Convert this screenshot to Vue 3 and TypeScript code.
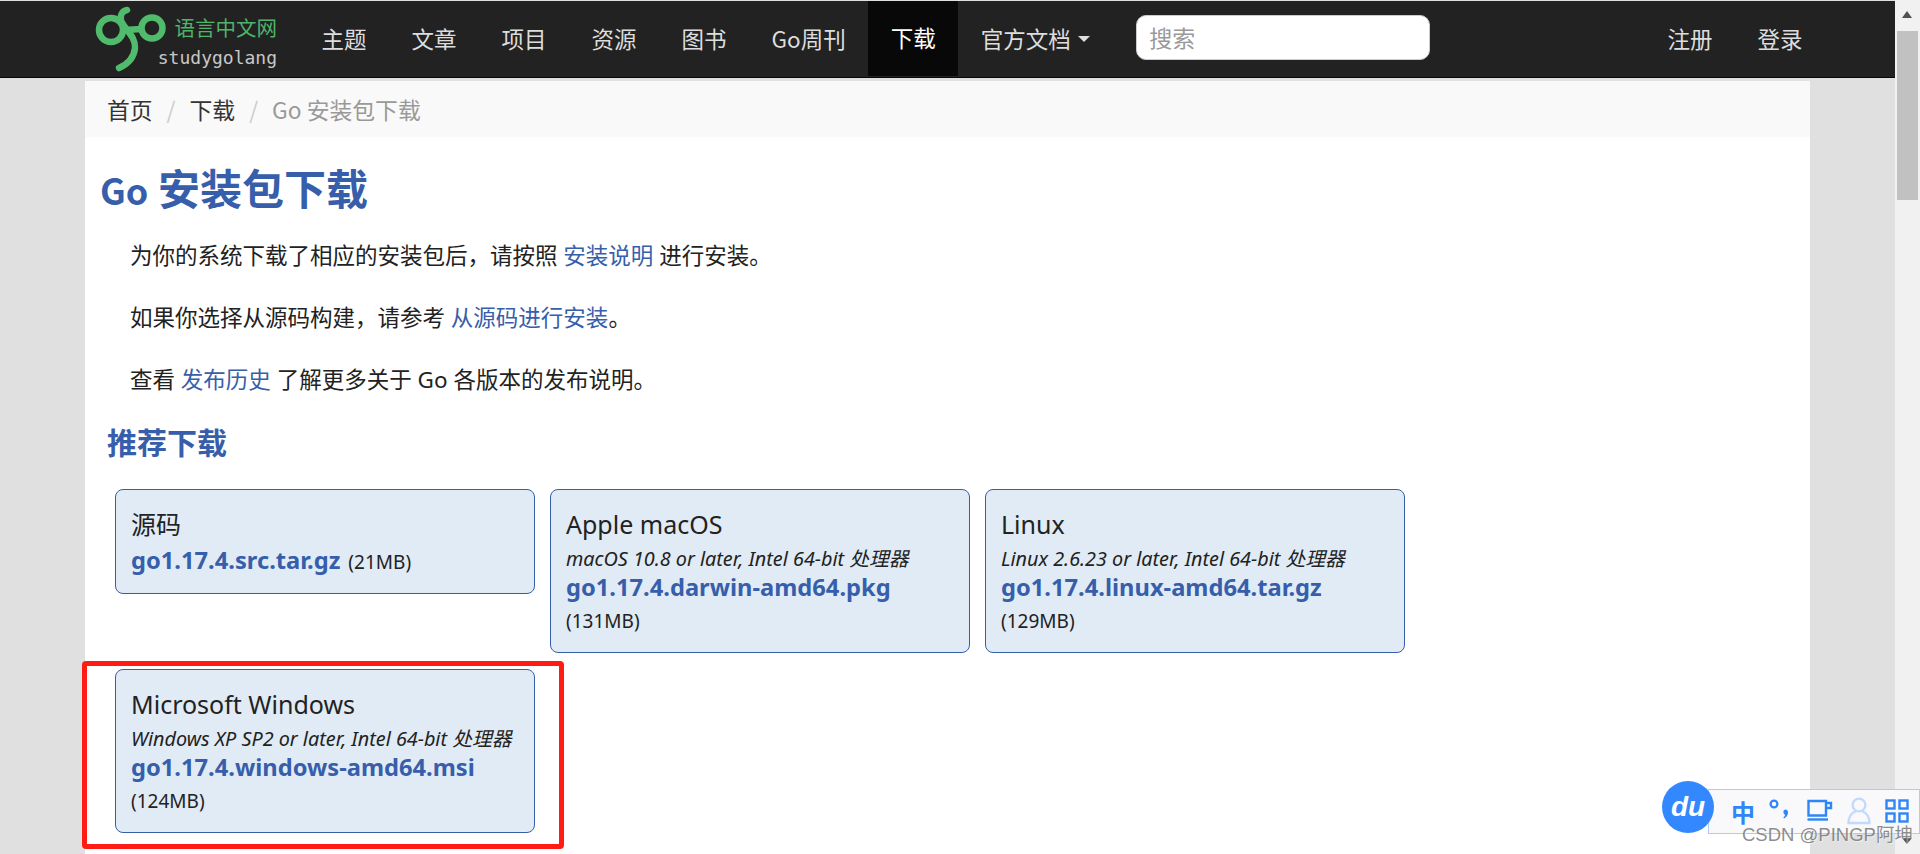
<script setup lang="ts">
const navItems = ['主题', '文章', '项目', '资源', '图书', 'Go周刊']

const cards = [
  { title: '源码', link: 'go1.17.4.src.tar.gz', size: '(21MB)' },
  { title: 'Apple macOS', os: 'macOS 10.8 or later, Intel 64-bit 处理器', link: 'go1.17.4.darwin-amd64.pkg', size: '(131MB)' },
  { title: 'Linux', os: 'Linux 2.6.23 or later, Intel 64-bit 处理器', link: 'go1.17.4.linux-amd64.tar.gz', size: '(129MB)' },
  { title: 'Microsoft Windows', os: 'Windows XP SP2 or later, Intel 64-bit 处理器', link: 'go1.17.4.windows-amd64.msi', size: '(124MB)' },
]
</script>

<template>
  <div class="page">
    <div class="main">
      <nav class="navbar">
        <a class="brand">
          <svg class="logo" width="76" height="70" viewBox="0 0 76 70">
            <g fill="none" stroke="#50bb6c" stroke-width="6.5" stroke-linecap="round">
              <circle cx="16" cy="24" r="12" />
              <circle cx="57" cy="22" r="10.5" />
              <path d="M32 4 C27 5 25 9 26 14 C28 22 41 30 40 42 C39 52 33 58 24 62" />
              <path d="M30 24 L46 23" />
            </g>
          </svg>
          <span class="brand-text">
            <span class="brand-cn">语言中文网</span>
            <span class="brand-en">studygolang</span>
          </span>
        </a>
        <a v-for="item in navItems" :key="item" class="nav-item">{{ item }}</a>
        <a class="nav-item active">下载</a>
        <a class="nav-item">官方文档<span class="caret"></span></a>
        <input class="search" placeholder="搜索" />
        <div class="nav-right">
          <a class="nav-item">注册</a>
          <a class="nav-item">登录</a>
        </div>
      </nav>

      <div class="container">
        <div class="breadcrumb">
          <a>首页</a>
          <span class="sep">/</span>
          <a>下载</a>
          <span class="sep">/</span>
          <span class="current">Go 安装包下载</span>
        </div>

        <h1><span class="h1-go">Go</span> 安装包下载</h1>
        <p>为你的系统下载了相应的安装包后，请按照 <a>安装说明</a> 进行安装。</p>
        <p>如果你选择从源码构建，请参考 <a>从源码进行安装</a>。</p>
        <p>查看 <a>发布历史</a> 了解更多关于 Go 各版本的发布说明。</p>
        <h2>推荐下载</h2>

        <div class="downloads">
          <div v-for="card in cards" :key="card.link" class="card">
            <div class="card-title">{{ card.title }}</div>
            <div v-if="card.os" class="card-os">{{ card.os }}</div>
            <div class="card-file" :class="{ wrap: card.os }">
              <a>{{ card.link }}</a> <span class="card-size">{{ card.size }}</span>
            </div>
          </div>
          <div class="highlight"></div>
        </div>
      </div>
    </div>

    <div class="scrollbar">
      <span class="arrow-up"></span>
      <span class="thumb"></span>
    </div>

    <div class="ime">
      <div class="ime-badge">
        <span>du</span>
      </div>
      <div class="ime-bar">
        <span class="ime-zh">中</span>
        <svg width="26" height="26" viewBox="0 0 26 26">
          <circle cx="6" cy="6" r="3.4" fill="none" stroke="#2f86f6" stroke-width="2.2" />
          <path d="M17 11.5 a3 3 0 0 1 3 3 c0 3 -2 5 -4 6 l-.6 -1.2 c1 -.7 1.6 -1.6 1.7 -2.4 a3 3 0 0 1 -.1 -5.4z" fill="#2f86f6" />
        </svg>
        <svg width="26" height="26" viewBox="0 0 26 26">
          <path d="M1.5 3 H19 V17.5 H1.5 Z M19 5 H24 V10 H19" fill="none" stroke="#2f86f6" stroke-width="2.4" />
          <path d="M0.5 21.5 H21" stroke="#2f86f6" stroke-width="2.4" />
        </svg>
        <svg width="26" height="28" viewBox="0 0 26 28">
          <circle cx="13" cy="8" r="6.4" fill="none" stroke="#c3dafc" stroke-width="2.4" />
          <path d="M10 14 C5 16 2.5 20 2.5 26 H23.5 C23.5 20 21 16 16 14" fill="none" stroke="#c3dafc" stroke-width="2.4" />
        </svg>
        <svg width="24" height="24" viewBox="0 0 24 24">
          <g fill="none" stroke="#2f86f6" stroke-width="2.4">
            <rect x="1.5" y="1.5" width="8" height="8" />
            <rect x="14.5" y="1.5" width="8" height="8" />
            <rect x="1.5" y="14.5" width="8" height="8" />
            <rect x="14.5" y="14.5" width="8" height="8" />
          </g>
        </svg>
      </div>
    </div>
    <span class="arrow-down"></span>
    <div class="watermark">CSDN @PINGP阿坤</div>
  </div>
</template>

<style>
html,
body {
  margin: 0;
  height: 854px;
  overflow: hidden;
  background: #e0e0e0;
}
</style>

<style scoped>
.page {
  position: relative;
  display: flex;
  height: 854px;
  overflow: hidden;
  font-family: "Noto Sans", "Noto Sans CJK SC", sans-serif;
  color: #222;
}

.main {
  flex: 1;
  min-width: 0;
}

.navbar {
  display: flex;
  align-items: center;
  height: 76px;
  margin-top: 1px;
  padding-left: 95px;
  background: #222;
  border-bottom: 1px solid #080808;
  font-family: "Noto Sans CJK SC", sans-serif;
}

.brand {
  position: relative;
  display: flex;
  flex: none;
  width: 204px;
  height: 76px;
}

.logo {
  position: absolute;
  left: 0;
  top: 5px;
}

.brand-text {
  display: flex;
  flex-direction: column;
  align-items: flex-end;
  width: 182px;
  padding-top: 12px;
}

.brand-cn {
  font-size: 20.5px;
  line-height: 28px;
  color: #4fb36a;
}

.brand-en {
  margin-top: 3px;
  font-family: "DejaVu Sans Mono", monospace;
  font-size: 18px;
  line-height: 28px;
  color: #c8c8c8;
}

.nav-item {
  box-sizing: border-box;
  display: flex;
  align-items: center;
  height: 75px;
  padding: 0 22.5px 3px;
  font-size: 22.5px;
  color: #ddd;
  white-space: nowrap;
}

.nav-item.active {
  background: #080808;
  color: #fff;
  align-self: flex-start;
}

.caret {
  margin-left: 7px;
  margin-top: 3px;
  border-top: 6px solid #ddd;
  border-left: 6px solid transparent;
  border-right: 6px solid transparent;
}

.search {
  box-sizing: border-box;
  flex: none;
  width: 294px;
  height: 45px;
  margin: 0 0 4px 24px;
  padding: 0 12px;
  border: 1px solid #ccc;
  border-radius: 10px;
  outline: none;
  background: #fff;
  font-family: "Noto Sans CJK SC", sans-serif;
  font-size: 23px;
}

.search::placeholder {
  color: #999;
}

.nav-right {
  display: flex;
  margin-left: auto;
  padding-right: 70px;
}

.container {
  box-sizing: border-box;
  width: 1725px;
  height: 773px;
  margin: 3px 0 0 85px;
  background: #fff;
}

.breadcrumb {
  display: flex;
  align-items: center;
  height: 56px;
  padding-left: 22px;
  box-sizing: border-box;
  background: #f9f9f9;
  font-family: "Noto Sans CJK SC", sans-serif;
  font-size: 22.8px;
  color: #333;
}

.sep {
  margin: 0 14px;
  color: #ccc;
}

.current {
  color: #999;
}

h1 {
  height: 47px;
  margin: 26px 0 0 15px;
  font-family: "Noto Sans CJK SC", sans-serif;
  font-size: 42px;
  line-height: 48px;
  font-weight: 700;
  color: #375eab;
}

.h1-go {
  font-size: 36px;
}

p {
  margin: 30px 0 28px 45px;
  font-size: 22.5px;
  line-height: 32px;
}

p a {
  color: #375eab;
}

h2 {
  margin: 28px 0 31px 22px;
  font-family: "Noto Sans CJK SC", sans-serif;
  font-size: 30px;
  line-height: 34px;
  font-weight: 700;
  color: #375eab;
}

.downloads {
  position: relative;
  display: grid;
  grid-template-columns: repeat(3, 420px);
  column-gap: 15px;
  row-gap: 16px;
  align-items: start;
  margin-left: 30px;
}

.card {
  box-sizing: border-box;
  padding: 16px 15px 15px;
  border: 1px solid #375eab;
  border-radius: 8px;
  background: #e0ebf5;
}

.card-title {
  height: 38px;
  font-size: 25px;
  line-height: 36px;
}

.card-os {
  height: 30px;
  font-size: 19.8px;
  line-height: 30px;
  font-style: italic;
}

.card-file {
  height: 34px;
  font-size: 19px;
  line-height: 32px;
}

.card-file a {
  font-size: 23.7px;
  font-weight: 700;
  color: #375eab;
}

.card-size {
  margin-left: 3px;
}

.card-file.wrap {
  height: 65px;
  line-height: 30px;
}

.card-file.wrap a {
  display: block;
  height: 32px;
  margin-top: -2px;
}

.card-file.wrap .card-size {
  display: block;
  margin: 2px 0 0;
  line-height: 31px;
}

.highlight {
  position: absolute;
  left: -33px;
  top: 172px;
  width: 482px;
  height: 188px;
  box-sizing: border-box;
  border: 5px solid #ff1c14;
  border-radius: 4px;
  pointer-events: none;
}

.scrollbar {
  position: relative;
  flex: none;
  width: 25px;
  background: #f1f1f1;
}

.arrow-up {
  position: absolute;
  left: 7px;
  top: 11px;
  border-bottom: 7px solid #505050;
  border-left: 5.5px solid transparent;
  border-right: 5.5px solid transparent;
}

.thumb {
  position: absolute;
  left: 2px;
  top: 31px;
  width: 21px;
  height: 169px;
  background: #c1c1c1;
}

.ime {
  position: absolute;
  left: 1662px;
  top: 781px;
  display: flex;
  align-items: center;
  width: 258px;
  height: 52px;
}

.ime-badge {
  position: relative;
  z-index: 1;
  display: flex;
  align-items: center;
  justify-content: center;
  flex: none;
  width: 52px;
  height: 52px;
  border-radius: 50%;
  background: #3388ff;
  font-family: "Liberation Sans", sans-serif;
  font-size: 28px;
  font-style: italic;
  font-weight: 700;
  color: #fff;
}

.ime-bar {
  box-sizing: border-box;
  display: flex;
  align-items: center;
  gap: 13px;
  width: 212px;
  height: 45px;
  margin: 8px 0 0 -6px;
  padding: 0 8px 0 22px;
  border: 1px solid #aecbf5;
  background: #f9f9fb;
}

.ime-zh {
  font-family: "Noto Sans CJK SC", sans-serif;
  font-size: 24px;
  font-weight: 700;
  color: #2f86f6;
}

.arrow-down {
  position: absolute;
  left: 1902px;
  top: 838px;
  border-top: 6px solid #505050;
  border-left: 5.5px solid transparent;
  border-right: 5.5px solid transparent;
}

.watermark {
  position: absolute;
  left: 1742px;
  top: 823px;
  font-family: "Liberation Sans", "Noto Sans CJK SC", sans-serif;
  font-size: 18.5px;
  line-height: 24px;
  color: rgba(120, 120, 120, 0.85);
  text-shadow: 1px 1px 1px rgba(255, 255, 255, 0.5);
  white-space: nowrap;
}
</style>
